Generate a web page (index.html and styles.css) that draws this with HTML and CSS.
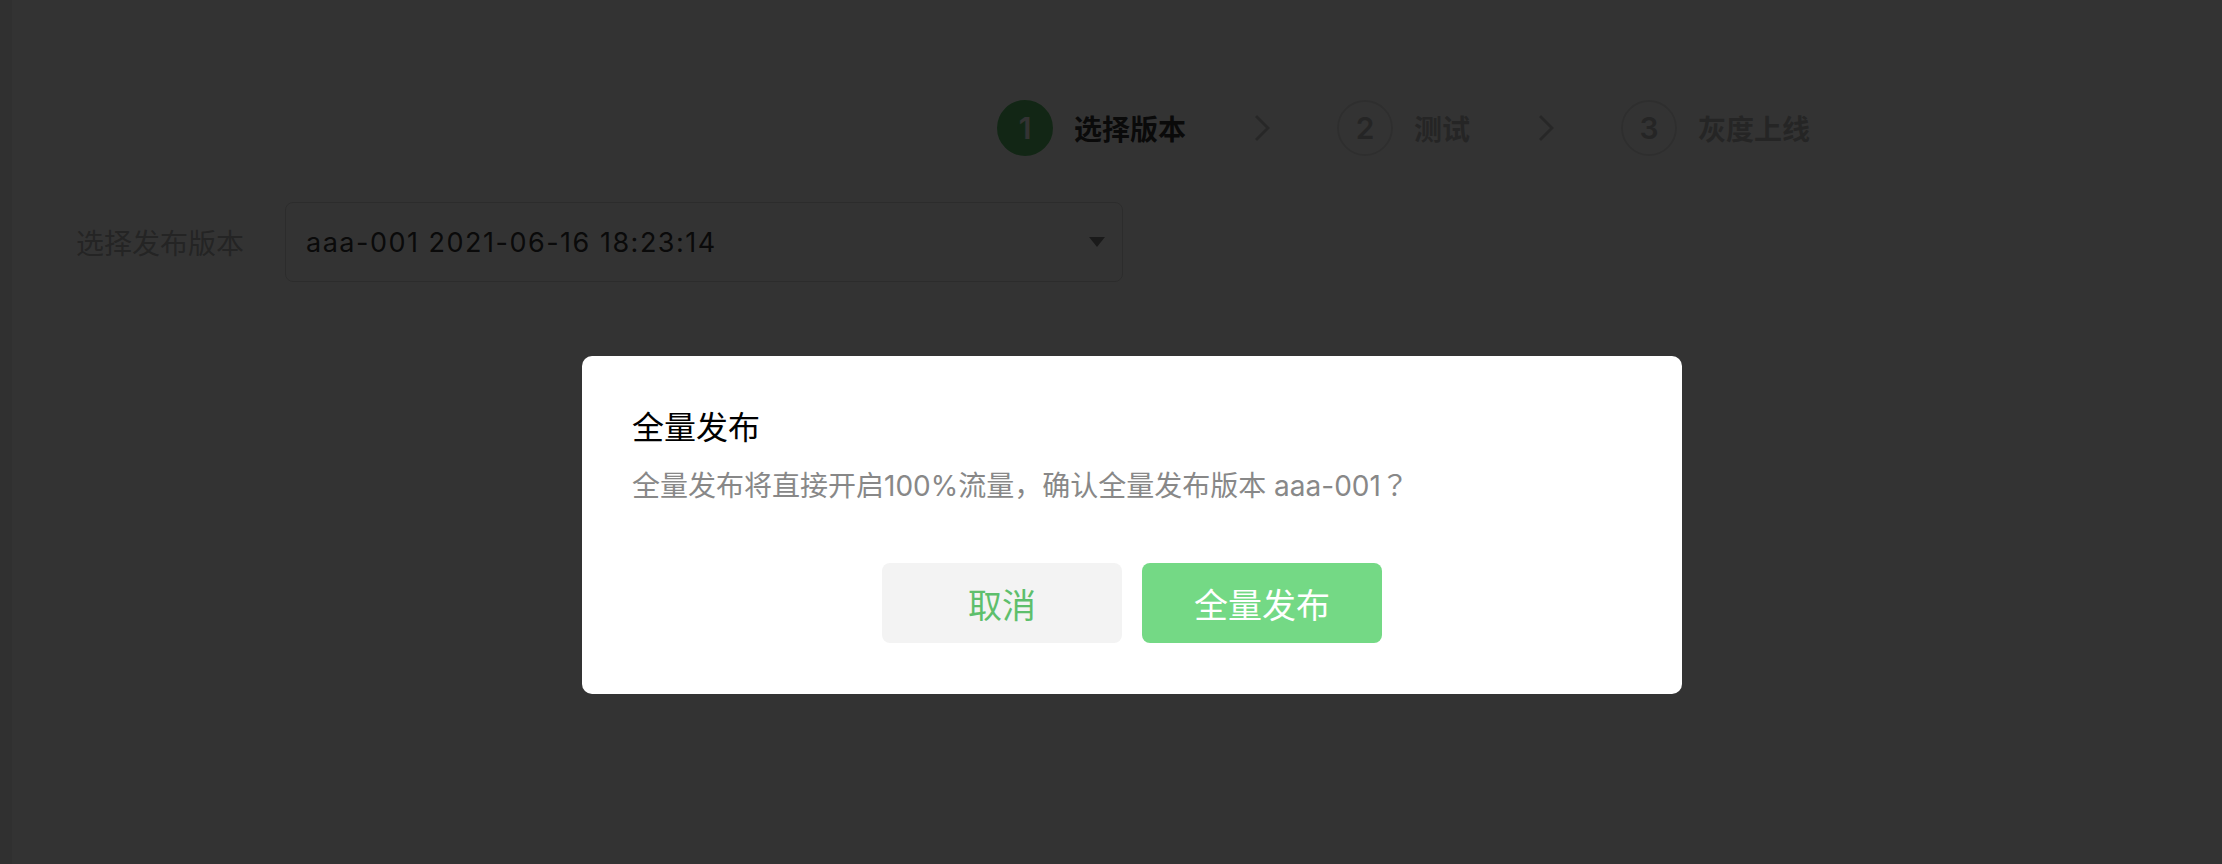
FILE: index.html
```html
<!DOCTYPE html>
<html lang="zh-CN">
<head>
    <meta charset="utf-8">
    <title>全量发布</title>
    <link rel="stylesheet" href="styles.css">
</head>
<body>
<div class="page">
    <div class="steps">
        <div class="step active">
            <span class="step-num">1</span>
            <span class="step-name">选择版本</span>
        </div>
        <div class="step-sep">
            <svg width="16" height="28" viewBox="0 0 16 28"><path d="M2 2 L14 14 L2 26" fill="none" stroke="currentColor" stroke-width="3"/></svg>
        </div>
        <div class="step">
            <span class="step-num">2</span>
            <span class="step-name">测试</span>
        </div>
        <div class="step-sep">
            <svg width="16" height="28" viewBox="0 0 16 28"><path d="M2 2 L14 14 L2 26" fill="none" stroke="currentColor" stroke-width="3"/></svg>
        </div>
        <div class="step">
            <span class="step-num">3</span>
            <span class="step-name">灰度上线</span>
        </div>
    </div>

    <div class="form-row">
        <label class="form-label">选择发布版本</label>
        <div class="select">
            <span class="select-value">aaa-001 2021-06-16 18:23:14</span>
            <span class="select-arrow"></span>
        </div>
    </div>
</div>

<div class="mask">
    <div class="dialog">
        <div class="dialog-title">全量发布</div>
        <div class="dialog-desc">全量发布将直接开启100%流量，确认全量发布版本 aaa-001<span class="qmark" lang="ja">？</span></div>
        <div class="dialog-btns">
            <button class="btn btn-cancel">取消</button>
            <button class="btn btn-ok">全量发布</button>
        </div>
    </div>
</div>
</body>
</html>
```

FILE: styles.css
```css
html, body{
    margin:0;
    height:100%;
}
body{
    background:#fff;
    font-family:Inter, "Noto Sans CJK SC", sans-serif;
    color:#333;
}
.qmark{
    font-family:"Noto Sans CJK JP", sans-serif;
}
.page{
    min-height:100%;
    box-sizing:border-box;
    border-left:12px solid #f0f0f0;
    padding:100px 0 0 64px;
}
.steps{
    display:flex;
    align-items:center;
    margin-left:921px;
}
.step{
    display:flex;
    align-items:center;
    gap:21px;
}
.step-num{
    width:56px;
    height:56px;
    box-sizing:border-box;
    border:2px solid #e6e6e6;
    border-radius:50%;
    display:flex;
    align-items:center;
    justify-content:center;
    font-size:30px;
    font-weight:600;
    color:#b8b8b8;
}
.step-name{
    font-size:28px;
    font-weight:700;
    color:#b8b8b8;
}
.step.active .step-num{
    background:#5cbf6c;
    border-color:#5cbf6c;
    color:#fff;
}
.step.active .step-name{
    color:#333;
}
.step-sep{
    width:151px;
    display:flex;
    justify-content:center;
    color:#c4c4c4;
}
.step-sep svg{
    display:block;
}

.form-row{
    display:flex;
    align-items:center;
    margin-top:46px;
}
.form-label{
    width:209px;
    font-size:28px;
    color:#b2b2b2;
}
.select{
    width:838px;
    height:80px;
    box-sizing:border-box;
    border:1px solid #d9d9d9;
    border-radius:8px;
    padding:0 17px 0 20px;
    display:flex;
    align-items:center;
    justify-content:space-between;
}
.select-value{
    font-size:27px;
    letter-spacing:1.5px;
    color:#333;
}
.select-arrow{
    width:0;
    height:0;
    border-left:8px solid transparent;
    border-right:8px solid transparent;
    border-top:10px solid #808080;
}

.mask{
    position:fixed;
    inset:0;
    background:rgba(0,0,0,.8);
    display:flex;
    align-items:flex-start;
    justify-content:center;
    padding:356px 0 0 42px;
}
.dialog{
    width:1100px;
    box-sizing:border-box;
    background:#fff;
    border-radius:10px;
    padding:50px 50px 51px;
}
.dialog-title{
    font-size:32px;
    line-height:44px;
    color:#000;
}
.dialog-desc{
    margin-top:18px;
    font-size:28px;
    line-height:32px;
    color:#888;
}
.dialog-btns{
    display:flex;
    justify-content:center;
    gap:20px;
    margin-top:61px;
}
.btn{
    width:240px;
    height:80px;
    border:0;
    border-radius:8px;
    font-family:inherit;
    font-size:34px;
    cursor:pointer;
}
.btn-cancel{
    background:#f3f3f3;
    color:#5ebf6c;
}
.btn-ok{
    background:#74d985;
    color:#fff;
}
```
